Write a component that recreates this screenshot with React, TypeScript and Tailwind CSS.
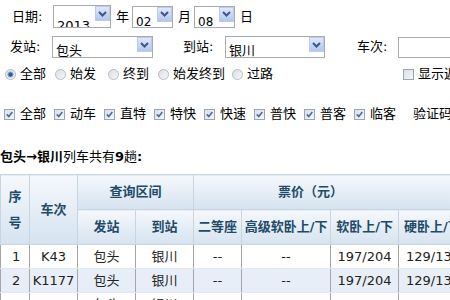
import React from 'react';

const FONT = { fontFamily: '"DejaVu Sans", "Noto Sans CJK SC", sans-serif' };

function Arrow() {
  return (
    <span className="flex h-[15px] w-[15px] shrink-0 items-center justify-center border border-[#bccbe8] bg-gradient-to-b from-[#dfe8fc] to-[#b3c6ee]">
      <svg width="9" height="6" viewBox="0 0 9 6">
        <path d="M1 1 L4.5 4.5 L8 1" fill="none" stroke="#3f5488" strokeWidth="2" />
      </svg>
    </span>
  );
}

function Select({ w, h, pt, text, small }: { w: string; h: string; pt: string; text: string; small?: boolean }) {
  return (
    <div className={`flex shrink-0 overflow-hidden border border-[#a5acb2] bg-white ${w} ${h}`}>
      <span className={`flex-1 overflow-hidden whitespace-nowrap pl-[3px] leading-[14px] ${small ? 'text-[12px]' : ''} ${pt}`}>{text}</span>
      <Arrow />
    </div>
  );
}

function Radio({ on }: { on?: boolean }) {
  return (
    <svg width="11" height="11" viewBox="0 0 11 11" className="shrink-0">
      <defs>
        <linearGradient id={on ? 'ron' : 'roff'} x1="0" y1="0" x2="1" y2="1">
          <stop offset="0" stopColor="#d9dde3" />
          <stop offset="1" stopColor="#f7f8fa" />
        </linearGradient>
      </defs>
      <circle cx="5.5" cy="5.5" r="5" fill={`url(#${on ? 'ron' : 'roff'})`} stroke="#b4bcc8" strokeWidth="1" />
      {on && <circle cx="5.5" cy="5.5" r="2.6" fill="#2f5c96" stroke="#8fb0d8" strokeWidth="1" />}
    </svg>
  );
}

function Check({ on }: { on?: boolean }) {
  return (
    <span className="flex h-[11px] w-[11px] shrink-0 items-center justify-center border border-[#9aa5b6] bg-gradient-to-br from-[#dcdfe5] to-[#f6f7f9]">
      {on && (
        <svg width="7" height="7" viewBox="0 0 7 7">
          <path d="M0.8 3.4 L2.8 5.6 L6.3 1" fill="none" stroke="#4b6aa3" strokeWidth="1.6" />
        </svg>
      )}
    </span>
  );
}

const types = ['全部', '动车', '直特', '特快', '快速', '普快', '普客', '临客'];

const rows = [
  ['1', 'K43', '包头', '银川', '--', '--', '197/204', '129/132'],
  ['2', 'K1177', '包头', '银川', '--', '--', '197/204', '129/132'],
  ['3', 'T177', '包头', '银川', '--', '--', '197/204', '129/132'],
];

const th = 'border border-[#c8d4df] bg-gradient-to-b from-[#f5f8fc] to-[#d5e3f0] font-bold text-[#1f4a68] text-center align-middle';

export default function App() {
  return (
    <div className="h-[300px] w-[450px] overflow-hidden bg-white text-[13px] text-black" style={FONT}>
      {/* 日期 */}
      <div className="mt-[5px] flex h-[23px] items-center whitespace-nowrap">
        <span className="w-[53px] shrink-0 pl-[12px]">日期:</span>
        <Select w="w-[58px]" h="h-[23px]" pt="pt-[13px]" text="2013" />
        <span className="ml-[5px] w-[16px] shrink-0">年</span>
        <Select w="w-[41px]" h="h-[22px]" pt="pt-[8px]" text="02" small />
        <span className="ml-[5px] w-[16px] shrink-0">月</span>
        <Select w="w-[41px]" h="h-[22px]" pt="pt-[8px]" text="08" small />
        <span className="ml-[5px]">日</span>
      </div>

      {/* 发站 到站 车次 */}
      <div className="mt-[8px] flex h-[22px] items-center whitespace-nowrap">
        <span className="w-[52px] shrink-0 pl-[10px]">发站:</span>
        <Select w="w-[101px]" h="h-[22px]" pt="pt-[7px]" text="包头" />
        <span className="ml-[30px] w-[42px] shrink-0">到站:</span>
        <Select w="w-[100px]" h="h-[22px]" pt="pt-[7px]" text="银川" />
        <span className="ml-[32px] w-[41px] shrink-0">车次:</span>
        <div className="h-[21px] w-[80px] shrink-0 border border-[#a5acb2] bg-white" />
      </div>

      {/* 站点类型 */}
      <div className="mt-[7px] flex h-[18px] items-center whitespace-nowrap">
        <span className="ml-[5px] flex shrink-0 items-center gap-[4px]"><Radio on />全部</span>
        <span className="ml-[9px] flex shrink-0 items-center gap-[4px]"><Radio />始发</span>
        <span className="ml-[12px] flex shrink-0 items-center gap-[4px]"><Radio />终到</span>
        <span className="ml-[9px] flex shrink-0 items-center gap-[4px]"><Radio />始发终到</span>
        <span className="ml-[7px] flex shrink-0 items-center gap-[4px]"><Radio />过路</span>
        <span className="ml-[130px] flex shrink-0 items-center gap-[4px]"><Check />显示返程</span>
      </div>

      {/* 车型 */}
      <div className="mt-[22px] flex h-[18px] items-center whitespace-nowrap pl-[4px]">
        {types.map((t) => (
          <span key={t} className="flex w-[50px] shrink-0 items-center gap-[5px]">
            <Check on />
            {t}
          </span>
        ))}
        <span className="ml-[9px]">验证码</span>
      </div>

      <div className="mt-[25px] h-[18px] whitespace-nowrap leading-[18px]">
        <b>包头→银川</b>列车共有<b>9</b>趟<b>:</b>
      </div>

      <table className="mt-[8px] w-[466px] table-fixed border-collapse text-[13px]">
        <colgroup>
          <col className="w-[29px]" />
          <col className="w-[48px]" />
          <col className="w-[58px]" />
          <col className="w-[58px]" />
          <col className="w-[48px]" />
          <col className="w-[89px]" />
          <col className="w-[68px]" />
          <col className="w-[68px]" />
        </colgroup>
        <thead>
          <tr className="h-[35px]">
            <th rowSpan={2} className={`${th} px-[6px] leading-[26px]`}>序号</th>
            <th rowSpan={2} className={th}>车次</th>
            <th colSpan={2} className={th}>查询区间</th>
            <th colSpan={4} className={`${th} !text-left pl-[84px] whitespace-nowrap`}>票价（元）</th>
          </tr>
          <tr className="h-[35px]">
            <th className={th}>发站</th>
            <th className={th}>到站</th>
            <th className={`${th} whitespace-nowrap`}>二等座</th>
            <th className={`${th} whitespace-nowrap`}>高级软卧上/下</th>
            <th className={`${th} whitespace-nowrap`}>软卧上/下</th>
            <th className={`${th} whitespace-nowrap !text-left pl-[5px]`}>硬卧上/下</th>
          </tr>
        </thead>
        <tbody>
          {rows.map((r, i) => (
            <tr key={i} className={`h-[24px] ${i % 2 === 1 ? 'bg-[#e7eef7]' : 'bg-white'}`}>
              {r.map((c, j) => (
                <td
                  key={j}
                  className={`whitespace-nowrap border-x border-x-[#a3a7ab] border-y border-y-[#e1e7ee] text-[#222] ${j === 0 ? 'pl-[11px] text-left' : 'text-center'} ${j === 7 ? '!text-left pl-[7px]' : ''}`}
                >
                  {c}
                </td>
              ))}
            </tr>
          ))}
        </tbody>
      </table>
    </div>
  );
}
